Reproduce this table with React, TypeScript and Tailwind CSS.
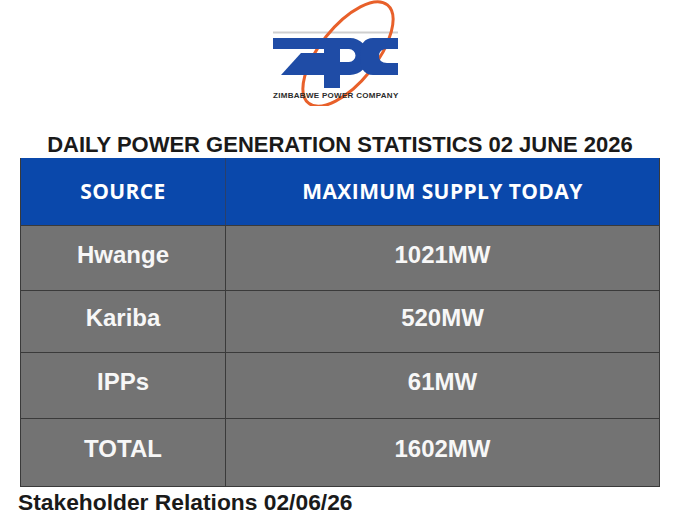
import React from "react";

const rows = [
  { source: "Hwange", value: "1021MW", h: "h-[65px]" },
  { source: "Kariba", value: "520MW", h: "h-[62px]" },
  { source: "IPPs", value: "61MW", h: "h-[66px]" },
  { source: "TOTAL", value: "1602MW", h: "h-[68px]" },
];

function Logo() {
  return (
    <div className="relative ml-[266px] h-[106px] w-[140px]">
      <svg
        className="absolute inset-0"
        width="140"
        height="106"
        viewBox="266 0 140 106"
      >
        <rect x="273" y="31.5" width="125" height="2" fill="#cfcfcf" />
        <ellipse
          cx="348"
          cy="54"
          rx="28"
          ry="63"
          transform="rotate(38.7 348 54)"
          fill="none"
          stroke="#e8602a"
          strokeWidth="3"
        />
        <g fill="#1f4ca6">
          <rect x="273" y="38" width="55" height="11" />
          <polygon points="301,53 324,53 324,75 281,75" />
          <path
            fillRule="evenodd"
            d="M324,38 H350 A18.5,18.5 0 0 1 350,75 H340 V88 H324 Z M340,49 H349 A6.5,6.5 0 0 1 349,62 H340 Z"
          />
          <path d="M373,38 H398 V49 H387 Q379,49 379,56 Q379,63 387,63 H398 V75 H373 Q360,75 360,56.5 Q360,38 373,38 Z" />
        </g>
      </svg>
      <div className="absolute left-[7px] top-[91px] whitespace-nowrap font-['Liberation_Sans',Arial,sans-serif] text-[8px] font-bold leading-[10px] tracking-[0.3px] text-[#2b2b2b]">
        ZIMBABWE POWER COMPANY
      </div>
    </div>
  );
}

export default function App() {
  return (
    <div className="flex h-[532px] w-[680px] flex-col bg-white font-['Liberation_Sans',Arial,sans-serif]">
      <Logo />
      <div className="mt-[27px] text-center text-[22px] font-bold leading-[24px] text-[#1a1a1a]">
        DAILY POWER GENERATION STATISTICS 02 JUNE 2026
      </div>
      <div className="mx-[20px] mt-[1px] w-[640px] border-x border-b border-[#3a3a3a]">
        <div className="grid h-[67px] grid-cols-[205px_1fr] bg-[#0a48ab] font-['Open_Sans',sans-serif] text-[21px] font-bold tracking-[0.4px] text-white">
          <div className="flex items-center justify-center border-r border-[#2a3f6a]">
            SOURCE
          </div>
          <div className="flex items-center justify-center">
            MAXIMUM SUPPLY TODAY
          </div>
        </div>
        {rows.map((r) => (
          <div
            key={r.source}
            className={`grid ${r.h} grid-cols-[205px_1fr] border-t border-[#3a3a3a] bg-[#737373] text-[24px] font-bold text-[#f7f7f7]`}
          >
            <div className="flex items-center justify-center border-r border-[#3a3a3a] pb-[7px]">
              {r.source}
            </div>
            <div className="flex items-center justify-center pb-[7px]">
              {r.value}
            </div>
          </div>
        ))}
      </div>
      <div className="ml-[18px] mt-[3px] text-[22.8px] font-bold leading-[24px] text-[#1a1a1a]">
        Stakeholder Relations 02/06/26
      </div>
    </div>
  );
}
